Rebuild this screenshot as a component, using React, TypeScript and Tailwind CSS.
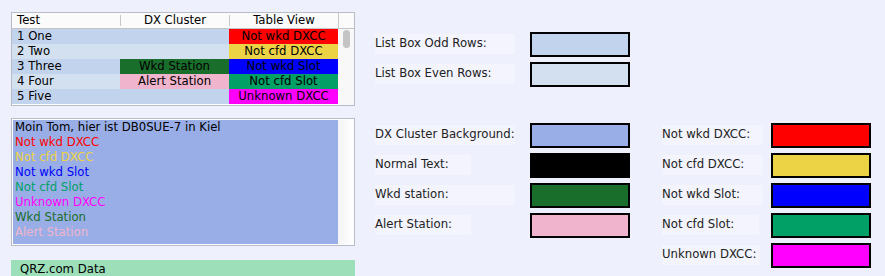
import React from 'react';

const rows = [
  { name: '1 One', dx: '', dxBg: '', tv: 'Not wkd DXCC', tvBg: 'bg-[#ff0000]', odd: true },
  { name: '2 Two', dx: '', dxBg: '', tv: 'Not cfd DXCC', tvBg: 'bg-[#ecd245]', odd: false },
  { name: '3 Three', dx: 'Wkd Station', dxBg: 'bg-[#1a6e2b]', tv: 'Not wkd Slot', tvBg: 'bg-[#0000ff]', odd: true },
  { name: '4 Four', dx: 'Alert Station', dxBg: 'bg-[#f0b4cc]', tv: 'Not cfd Slot', tvBg: 'bg-[#00a066]', odd: false },
  { name: '5 Five', dx: '', dxBg: '', tv: 'Unknown DXCC', tvBg: 'bg-[#ff00ff]', odd: true },
];

const clusterLines = [
  { text: 'Moin Tom, hier ist DB0SUE-7 in Kiel', color: 'text-black' },
  { text: 'Not wkd DXCC', color: 'text-[#ff0000]' },
  { text: 'Not cfd DXCC', color: 'text-[#ecd245]' },
  { text: 'Not wkd Slot', color: 'text-[#0000ff]' },
  { text: 'Not cfd Slot', color: 'text-[#00a066]' },
  { text: 'Unknown DXCC', color: 'text-[#ff00ff]' },
  { text: 'Wkd Station', color: 'text-[#1a6e2b]' },
  { text: 'Alert Station', color: 'text-[#f0b4cc]' },
];

// label box width mimics the preferred size of the swing label
const Swatch = ({ label, box, color, labelW }: { label: string; box: string; color: string; labelW: string }) => (
  <div className="flex items-center h-[25px]">
    <div className={labelW}>
      <span className={`inline-flex items-center h-[20px] -mt-[2px] bg-[#f3f4fe] ${box}`}>{label}</span>
    </div>
    <div className={`w-[100px] h-[25px] border-2 border-black ${color}`} />
  </div>
);

export default function App() {
  return (
    <div className="w-[885px] h-[276px] overflow-hidden bg-[#eef0fd] text-[11.7px] text-[#222] flex pl-[11px] pt-[12px]" style={{ fontFamily: '"DejaVu Sans", sans-serif' }}>
      <div className="w-[344px] flex flex-col">
        {/* table */}
        <div className="h-[94px] shrink-0 border border-[#b8bcc6] bg-white flex">
          <div className="w-[326px] flex flex-col">
            <div className="h-[16px] flex bg-[#fbfbfb] border-b border-[#c4c4c8] text-black">
              <div className="w-[108px] pl-[5px] flex items-center">Test</div>
              <div className="w-[109px] flex items-center justify-center border-l border-[#c8c8c8] my-[2px]">DX Cluster</div>
              <div className="w-[109px] flex items-center justify-center border-l border-[#c8c8c8] my-[2px]">Table View</div>
            </div>
            {rows.map((r) => (
              <div key={r.name} className={`h-[15px] flex text-black ${r.odd ? 'bg-[#c2d3ee]' : 'bg-[#d2e0f0]'}`}>
                <div className="w-[108px] pl-[5px] flex items-center">{r.name}</div>
                <div className={`w-[109px] flex items-center justify-center ${r.dxBg}`}>{r.dx}</div>
                <div className={`w-[109px] flex items-center justify-center ${r.tvBg}`}>{r.tv}</div>
              </div>
            ))}
          </div>
          <div className="flex-1 flex flex-col">
            <div className="h-[16px] bg-[#fbfbfb] border-b border-[#c4c4c8] border-l border-l-[#c8c8c8]" />
            <div className="flex-1 bg-[#f8f8f8] flex justify-center pt-[1px]">
              <div className="w-[7px] h-[18px] rounded-[4px] bg-[#c4c4c4]" />
            </div>
          </div>
        </div>

        {/* dx cluster text */}
        <div className="mt-[12px] h-[128px] shrink-0 border border-[#b8bcc6] bg-white p-[1px] flex">
          <div className="w-[325px] bg-[#99aee6] pl-[2px]">
            {clusterLines.map((l) => (
              <div key={l.text} className={`h-[15px] flex items-center ${l.color}`}>{l.text}</div>
            ))}
          </div>
          <div className="flex-1 bg-gradient-to-r from-[#f4f4f4] to-white" />
        </div>

        {/* qrz bar */}
        <div className="mt-[14px] h-[20px] shrink-0 bg-[#9cdfb9] pl-[9px] pt-[1px] text-black">QRZ.com Data</div>
      </div>

      <div className="ml-[20px] pt-[20px] flex flex-col">
        <div className="flex flex-col gap-[5px]">
          <Swatch label="List Box Odd Rows:" box="w-[140px]" color="bg-[#c2d3ee]" labelW="w-[155px]" />
          <Swatch label="List Box Even Rows:" box="w-[140px]" color="bg-[#d2e0f0]" labelW="w-[155px]" />
        </div>
        <div className="mt-[36px] flex gap-[32px]">
          <div className="flex flex-col gap-[5px]">
            <Swatch label="DX Cluster Background:" box="w-[140px]" color="bg-[#99aee6]" labelW="w-[155px]" />
            <Swatch label="Normal Text:" box="w-[96px]" color="bg-black" labelW="w-[155px]" />
            <Swatch label="Wkd station:" box="w-[140px]" color="bg-[#1a6e2b]" labelW="w-[155px]" />
            <Swatch label="Alert Station:" box="w-[96px]" color="bg-[#f0b4cc]" labelW="w-[155px]" />
          </div>
          <div className="flex flex-col gap-[5px]">
            <Swatch label="Not wkd DXCC:" box="w-[101px]" color="bg-[#ff0000]" labelW="w-[109px]" />
            <Swatch label="Not cfd DXCC:" box="w-[101px]" color="bg-[#ecd245]" labelW="w-[109px]" />
            <Swatch label="Not wkd Slot:" box="w-[101px]" color="bg-[#0000ff]" labelW="w-[109px]" />
            <Swatch label="Not cfd Slot:" box="w-[97px]" color="bg-[#00a066]" labelW="w-[109px]" />
            <Swatch label="Unknown DXCC:" box="w-[98px]" color="bg-[#ff00ff]" labelW="w-[109px]" />
          </div>
        </div>
      </div>
    </div>
  );
}
